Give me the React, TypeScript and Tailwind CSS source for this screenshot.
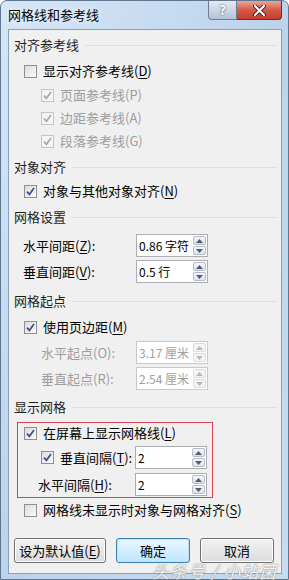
import React from "react";

type CheckProps = { checked?: boolean; disabled?: boolean };

function CheckBox({ checked, disabled }: CheckProps) {
  return (
    <span
      className={`relative flex h-[13px] w-[13px] shrink-0 items-center justify-center border bg-gradient-to-br ${
        disabled
          ? "border-[#c4c4c4] from-[#f2f2f2] to-[#f7f7f7]"
          : "border-[#8e8f8f] from-[#dcdcdc] to-[#fbfbfb]"
      }`}
    >
      {checked && (
        <svg width="11" height="11" viewBox="0 0 11 11">
          <path
            d="M2 5.6 L4.4 8.3 L9 2"
            fill="none"
            stroke={disabled ? "#a9a9a9" : "#3c4f8a"}
            strokeWidth="1.7"
          />
        </svg>
      )}
    </span>
  );
}

function Header({ title, className = "" }: { title: string; className?: string }) {
  return (
    <div className={`flex h-[18px] items-center pl-[5px] pr-[4px] ${className}`}>
      <span className="text-[13px] text-[#1e1e1e]">{title}</span>
      <span className="ml-[6px] h-px flex-1 bg-[#d9dee4]" />
    </div>
  );
}

function Mn({ children }: { children: React.ReactNode }) {
  return <span className="underline underline-offset-2">{children}</span>;
}

function CheckRow({
  label,
  checked,
  disabled,
  indent,
  className = "",
}: {
  label: React.ReactNode;
  checked?: boolean;
  disabled?: boolean;
  indent: string;
  className?: string;
}) {
  return (
    <div className={`flex h-[18px] items-center gap-[6px] ${indent} ${className}`}>
      <CheckBox checked={checked} disabled={disabled} />
      <span className={`text-[13px] ${disabled ? "text-[#9d9d9d]" : "text-black"}`}>{label}</span>
    </div>
  );
}

function Arrow({ up, disabled }: { up?: boolean; disabled?: boolean }) {
  return (
    <svg width="7" height="4" viewBox="0 0 7 4">
      <path d={up ? "M0 4 L3.5 0 L7 4 Z" : "M0 0 L3.5 4 L7 0 Z"} fill={disabled ? "#b8b8b8" : "#4f5d73"} />
    </svg>
  );
}

function Spin({ value, disabled }: { value: string; disabled?: boolean }) {
  const btn = disabled
    ? "border-[#dcdcdc] bg-[#f4f4f4]"
    : "border-[#b5bcc7] bg-gradient-to-b from-[#f4f6f8] to-[#dde3ea]";
  return (
    <div
      className={`flex h-[23px] w-[72px] items-stretch border bg-white ${
        disabled ? "border-[#c9c9c9]" : "border-[#abadb3]"
      }`}
    >
      <span
        className={`flex flex-1 items-center pl-[2px] text-[12px] whitespace-nowrap ${
          disabled ? "text-[#a0a0a0]" : "text-black"
        }`}
      >
        {value}
      </span>
      <div className="flex w-[14px] flex-col gap-px py-px pr-px">
        <span className={`flex flex-1 items-center justify-center rounded-[2px] border ${btn}`}>
          <Arrow up disabled={disabled} />
        </span>
        <span className={`flex flex-1 items-center justify-center rounded-[2px] border ${btn}`}>
          <Arrow disabled={disabled} />
        </span>
      </div>
    </div>
  );
}

function SpinRow({
  label,
  value,
  disabled,
  labelClass,
  className = "",
  check,
}: {
  label: React.ReactNode;
  value: string;
  disabled?: boolean;
  labelClass: string;
  className?: string;
  check?: boolean;
}) {
  return (
    <div className={`flex h-[23px] items-center ${className}`}>
      <div className={`flex flex-1 items-center gap-[6px] ${labelClass}`}>
        {check && <CheckBox checked />}
        <span className={`text-[13px] ${disabled ? "text-[#9d9d9d]" : "text-black"}`}>{label}</span>
      </div>
      <Spin value={value} disabled={disabled} />
    </div>
  );
}

function Button({ label, primary, w }: { label: React.ReactNode; primary?: boolean; w: string }) {
  return (
    <div
      className={`flex h-[25px] items-center justify-center rounded-[3px] border text-[13px] text-black ${w} ${
        primary
          ? "border-[#3c7fb1] bg-gradient-to-b from-[#eaf6fd] to-[#bee6fd] shadow-[inset_0_0_0_1px_#bfe3f7]"
          : "border-[#707070] bg-gradient-to-b from-[#f2f2f2] to-[#dcdcdc] shadow-[inset_0_0_0_1px_#fcfcfc]"
      }`}
    >
      {label}
    </div>
  );
}

export default function App() {
  return (
    <div className="relative h-[580px] w-[289px] overflow-hidden font-['Noto_Sans_CJK_SC','Liberation_Sans',sans-serif]">
      <div className="flex h-full w-full flex-col rounded-t-[7px] border border-[#5f7690] bg-gradient-to-br from-[#d6e6f6] via-[#bcd3ec] to-[#c8dcf0]">
        {/* title bar */}
        <div className="flex h-[28px] items-start justify-between">
          <span className="pl-[7px] pt-[4px] text-[13px] text-black [text-shadow:0_0_6px_#ffffff]">网格线和参考线</span>
          <div className="mr-[6px] flex">
            <span className="flex h-[19px] w-[29px] items-center justify-center rounded-bl-[4px] border border-t-0 border-[#6b7d92] bg-gradient-to-b from-[#e3eaf3] to-[#b3c3d6] text-[13px] font-bold text-white [text-shadow:0_0_2px_#2b3a4d]">
              ?
            </span>
            <span className="flex h-[19px] w-[45px] items-center justify-center rounded-br-[4px] border border-t-0 border-l-0 border-[#6e2a22] bg-gradient-to-b from-[#e8a597] via-[#d35a45] to-[#c4402c]">
              <svg width="13" height="11" viewBox="0 0 13 11">
                <path d="M2 1 L11 10 M11 1 L2 10" stroke="#4a1b14" strokeWidth="4" strokeLinecap="round" />
                <path d="M2 1 L11 10 M11 1 L2 10" stroke="#ffffff" strokeWidth="2.2" strokeLinecap="round" />
              </svg>
            </span>
          </div>
        </div>

        {/* client area */}
        <div className="mb-[5px] ml-[7px] mr-[6px] flex flex-1 flex-col border border-[#8aa0b8] bg-[#f0f0f0]">
          <Header title="对齐参考线" className="mt-[6px]" />
          <CheckRow indent="pl-[15px]" className="mt-[8px]" label={<>显示对齐参考线(<Mn>D</Mn>)</>} />
          <CheckRow indent="pl-[32px]" className="mt-[6px]" checked disabled label="页面参考线(P)" />
          <CheckRow indent="pl-[32px]" className="mt-[5px]" checked disabled label="边距参考线(A)" />
          <CheckRow indent="pl-[32px]" className="mt-[5px]" checked disabled label="段落参考线(G)" />

          <Header title="对象对齐" className="mt-[8px]" />
          <CheckRow indent="pl-[15px]" className="mt-[6px]" checked label={<>对象与其他对象对齐(<Mn>N</Mn>)</>} />

          <Header title="网格设置" className="mt-[8px]" />
          <div className="flex w-[199px] flex-col">
            <SpinRow className="mt-[8px]" labelClass="pl-[14px]" label={<>水平间距(<Mn>Z</Mn>):</>} value="0.86 字符" />
            <SpinRow className="mt-[3px]" labelClass="pl-[14px]" label={<>垂直间距(<Mn>V</Mn>):</>} value="0.5 行" />
          </div>

          <Header title="网格起点" className="mt-[9px]" />
          <CheckRow indent="pl-[15px]" className="mt-[8px]" checked label={<>使用页边距(<Mn>M</Mn>)</>} />
          <div className="flex w-[199px] flex-col">
            <SpinRow className="mt-[5px]" labelClass="pl-[32px]" disabled label="水平起点(O):" value="3.17 厘米" />
            <SpinRow className="mt-[3px]" labelClass="pl-[32px]" disabled label="垂直起点(R):" value="2.54 厘米" />
          </div>

          <Header title="显示网格" className="mt-[8px]" />
          <div className="ml-[8px] mt-[6px] flex h-[76px] w-[196px] flex-col border border-[#d8454f] pr-[5px]">
            <CheckRow indent="pl-[6px]" className="mt-[1px]" checked label={<>在屏幕上显示网格线(<Mn>L</Mn>)</>} />
            <SpinRow className="mt-[4px]" labelClass="pl-[23px]" check label={<>垂直间隔(<Mn>T</Mn>):</>} value="2" />
            <SpinRow className="mt-[4px]" labelClass="pl-[20px]" label={<>水平间隔(<Mn>H</Mn>):</>} value="2" />
          </div>
          <CheckRow indent="pl-[15px]" className="mt-[3px]" label={<>网格线未显示时对象与网格对齐(<Mn>S</Mn>)</>} />

          <div className="ml-[5px] mt-[19px] flex gap-[10px]">
            <Button w="w-[92px]" label={<>设为默认值(<Mn>E</Mn>)</>} />
            <Button w="w-[74px]" primary label="确定" />
            <Button w="w-[74px]" label="取消" />
          </div>
        </div>
      </div>

      {/* watermark */}
      <span className="absolute left-[152px] top-[558px] text-[17px] italic tracking-[1px] text-white/90 [text-shadow:0_0_1px_#8a8a8a,0_0_2px_#9a9a9a]">
        头条号 / 小站菌
      </span>
    </div>
  );
}
